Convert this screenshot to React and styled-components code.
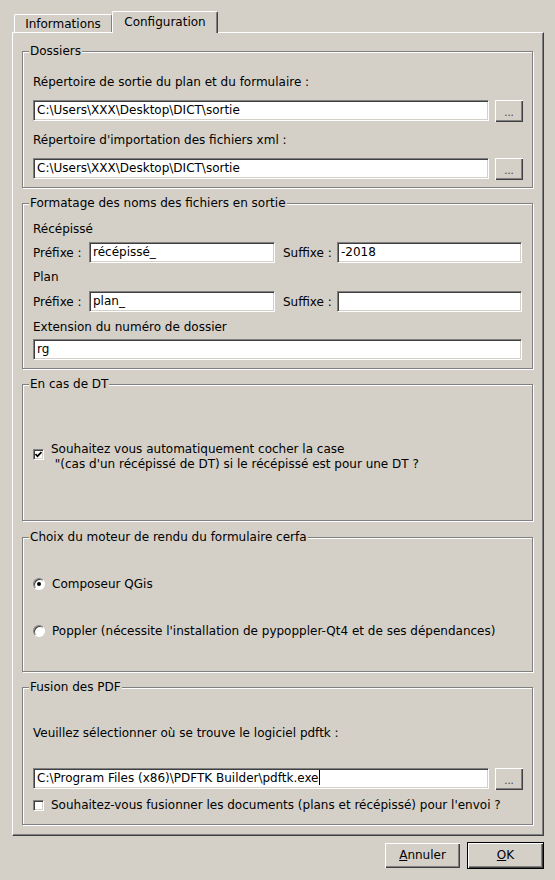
import React from 'react'
import styled, { createGlobalStyle } from 'styled-components'

const Global = createGlobalStyle`
body{
margin:0;
background:#d4d0c8;
font-family:"DejaVu Sans", "Liberation Sans", sans-serif;
font-size:12px;
color:#000;
}
*{box-sizing:border-box;}
`;

const Dialog = styled.div`
width:555px;
height:880px;
padding:11px 11px 0 12px;
display:flex;
flex-direction:column;`;

const TabBar = styled.div`
display:flex;
align-items:flex-end;
height:21px;
padding-left:2px;`;

const Tab = styled.div`
position:relative;
width:${p => p.$w}px;
height:${p => p.$active ? 22 : 18}px;
margin-bottom:${p => p.$active ? -1 : 0}px;
padding-top:${p => p.$active ? 3 : 2}px;
text-align:center;
line-height:14px;
background:#d4d0c8;
border-top:1px solid #fff;
border-left:1px solid #fff;
border-right:1px solid ${p => p.$active ? '#404040' : '#808080'};
border-radius:2px 2px 0 0;
box-shadow:${p => p.$active ? 'inset -1px 0 0 #808080' : 'none'};
z-index:${p => p.$active ? 1 : 0};`;

const Pane = styled.div`
height:804px;
border-top:1px solid #fff;
border-left:1px solid #fff;
border-right:1px solid #404040;
border-bottom:1px solid #404040;
box-shadow:inset -1px -1px 0 #808080;
padding:18px 10px 10px 9px;
display:flex;
flex-direction:column;
gap:15px;`;

const Group = styled.div`
position:relative;
height:${p => p.$h}px;
margin-top:${p => p.$mt || 0}px;
border:1px solid #808080;
box-shadow:inset 1px 1px 0 #fff, 1px 1px 0 #fff;
padding:${p => p.$pt}px ${p => p.$pr ?? 9}px 0 10px;
display:flex;
flex-direction:column;`;

const GroupTitle = styled.span`
position:absolute;
top:-8px;
left:6px;
padding:0 1px;
line-height:15px;
background:#d4d0c8;`;

const Label = styled.div`
line-height:14px;
height:14px;
margin-top:${p => p.$mt || 0}px;
white-space:nowrap;`;

const PathRow = styled.div`
display:flex;
gap:6px;
margin-top:${p => p.$mt || 0}px;`;

const LineEdit = styled.div`
flex:${p => p.$w ? 'none' : 1};
width:${p => p.$w ? p.$w + 'px' : 'auto'};
height:21px;
background:#fff;
border-top:1px solid #808080;
border-left:1px solid #808080;
border-bottom:1px solid #fff;
border-right:1px solid #fff;
box-shadow:inset 1px 1px 0 #404040, inset -1px -1px 0 #d4d0c8;
padding:0 3px;
line-height:19px;
white-space:nowrap;
overflow:hidden;`;

const Caret = styled.span`
display:inline-block;
width:1px;
height:15px;
background:#000;
vertical-align:-3px;`;

const Button = styled.button`
width:${p => p.$w}px;
height:${p => p.$h}px;
padding:0;
font:inherit;
color:#000;
background:#d4d0c8;
border:none;
box-shadow:inset 1px 1px 0 #fff, inset -1px -1px 0 #404040, inset -2px -2px 0 #808080;
line-height:${p => p.$h - 2}px;
text-align:center;`;

const BrowseButton = styled(Button)`
font-size:10px;
color:#333;
padding-top:3px;`;

const DefaultFrame = styled.div`
border:1px solid #000;
display:flex;`;

const NameRow = styled.div`
display:grid;
grid-template-columns:56px 186px 8px 54px 1fr;
align-items:center;
margin-top:${p => p.$mt || 0}px;`;

const CheckRow = styled.div`
display:flex;
align-items:${p => p.$top ? 'flex-start' : 'center'};
gap:7px;
margin-top:${p => p.$mt || 0}px;`;

const CheckBox = styled.div`
flex:none;
width:11px;
height:11px;
margin-top:${p => p.$mt || 0}px;
background:#fff;
border-top:1px solid #808080;
border-left:1px solid #808080;
border-bottom:1px solid #fff;
border-right:1px solid #fff;
box-shadow:inset 1px 1px 0 #404040, inset -1px -1px 0 #d4d0c8;
display:flex;
align-items:center;
justify-content:center;`;

const CheckText = styled.div`
line-height:15px;
white-space:pre;`;

const Radio = styled.div`
flex:none;
width:12px;
height:12px;
border-radius:50%;
background:#fff;
border:1px solid;
border-color:#808080 #fff #fff #808080;
box-shadow:inset 1px 1px 0 #404040;
display:flex;
align-items:center;
justify-content:center;
&::after{
content:"";
width:4px;
height:4px;
border-radius:50%;
background:${p => p.$on ? '#000' : 'transparent'};
}`;

const RadioRow = styled.div`
display:flex;
align-items:center;
gap:7px;
line-height:14px;
margin-top:${p => p.$mt || 0}px;`;

const ButtonBar = styled.div`
display:flex;
justify-content:flex-end;
align-items:center;
gap:7px;
margin-top:6px;`;

const Check = () => (
  <svg width="7" height="7" viewBox="0 0 7 7">
    <polyline points="0.5,3 2.5,5.2 6.5,1" fill="none" stroke="#000" strokeWidth="1.7" />
  </svg>
)

export default function App() {
  return (
    <Dialog>
      <Global />
      <TabBar>
        <Tab $w={98}>Informations</Tab>
        <Tab $w={106} $active>Configuration</Tab>
      </TabBar>
      <Pane>
        <Group $h={137} $pt={23}>
          <GroupTitle>Dossiers</GroupTitle>
          <Label>Répertoire de sortie du plan et du formulaire :</Label>
          <PathRow $mt={11}>
            <LineEdit>C:\Users\XXX\Desktop\DICT\sortie</LineEdit>
            <BrowseButton $w={28} $h={22}>...</BrowseButton>
          </PathRow>
          <Label $mt={11}>Répertoire d'importation des fichiers xml :</Label>
          <PathRow $mt={11}>
            <LineEdit>C:\Users\XXX\Desktop\DICT\sortie</LineEdit>
            <BrowseButton $w={28} $h={22}>...</BrowseButton>
          </PathRow>
        </Group>

        <Group $h={166} $pt={18} $pr={10}>
          <GroupTitle>Formatage des noms des fichiers en sortie</GroupTitle>
          <Label>Récépissé</Label>
          <NameRow $mt={6}>
            <span>Préfixe :</span>
            <LineEdit>récépissé_</LineEdit>
            <span />
            <span>Suffixe :</span>
            <LineEdit>-2018</LineEdit>
          </NameRow>
          <Label $mt={7}>Plan</Label>
          <NameRow $mt={7}>
            <span>Préfixe :</span>
            <LineEdit>plan_</LineEdit>
            <span />
            <span>Suffixe :</span>
            <LineEdit />
          </NameRow>
          <Label $mt={8}>Extension du numéro de dossier</Label>
          <PathRow $mt={5}>
            <LineEdit>rg</LineEdit>
          </PathRow>
        </Group>

        <Group $h={137} $pt={57}>
          <GroupTitle>En cas de DT</GroupTitle>
          <CheckRow $top>
            <CheckBox $mt={7}><Check /></CheckBox>
            <CheckText>{'Souhaitez vous automatiquement cocher la case\n "(cas d\'un récépissé de DT) si le récépissé est pour une DT ?'}</CheckText>
          </CheckRow>
        </Group>

        <Group $h={135} $pt={39} $mt={1}>
          <GroupTitle>Choix du moteur de rendu du formulaire cerfa</GroupTitle>
          <RadioRow>
            <Radio $on />
            <span>Composeur QGis</span>
          </RadioRow>
          <RadioRow $mt={33}>
            <Radio />
            <span>Poppler (nécessite l'installation de pypoppler-Qt4 et de ses dépendances)</span>
          </RadioRow>
        </Group>

        <Group $h={138} $pt={38}>
          <GroupTitle>Fusion des PDF</GroupTitle>
          <Label>Veuillez sélectionner où se trouve le logiciel pdftk :</Label>
          <PathRow $mt={28}>
            <LineEdit>C:\Program Files (x86)\PDFTK Builder\pdftk.exe<Caret /></LineEdit>
            <BrowseButton $w={28} $h={22}>...</BrowseButton>
          </PathRow>
          <CheckRow $mt={8}>
            <CheckBox />
            <CheckText>Souhaitez-vous fusionner les documents (plans et récépissé) pour l'envoi ?</CheckText>
          </CheckRow>
        </Group>
      </Pane>
      <ButtonBar>
        <Button $w={75} $h={25}><u>A</u>nnuler</Button>
        <DefaultFrame>
          <Button $w={75} $h={25}><u>O</u>K</Button>
        </DefaultFrame>
      </ButtonBar>
    </Dialog>
  )
}
